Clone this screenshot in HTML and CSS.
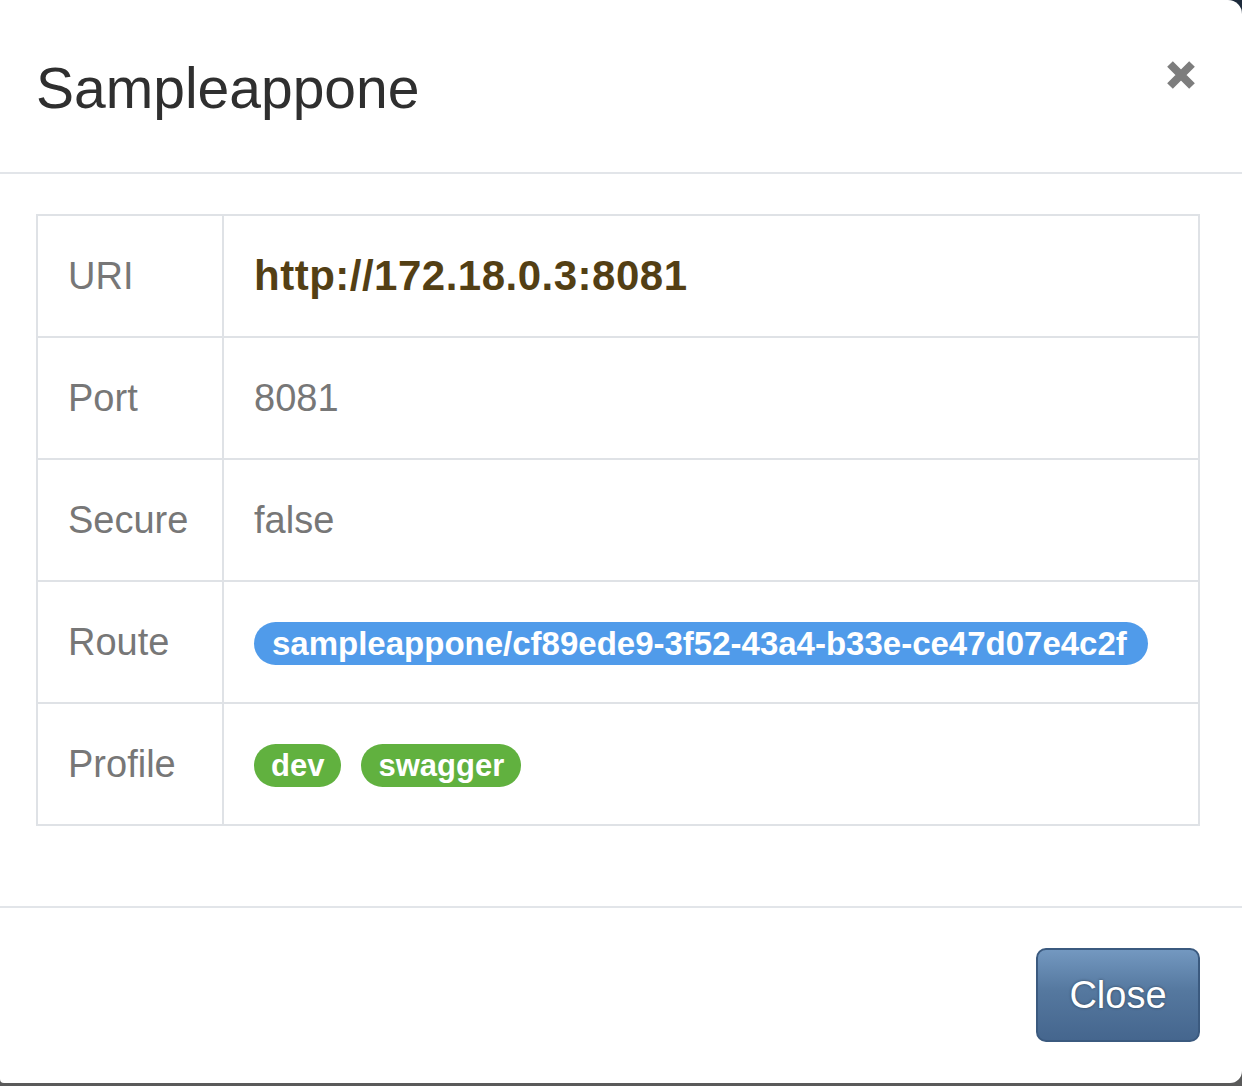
FILE: index.html
```html
<!DOCTYPE html>
<html>
<head>
<meta charset="utf-8">
<link rel="stylesheet" href="styles.css">
</head>
<body>
<div class="modal">
  <div class="modal-header">
    <h2 class="modal-title">Sampleappone</h2>
    <button class="close" aria-label="Close">
      <svg width="30" height="30" viewBox="0 0 30 30"><path d="M4 4 L26 26 M26 4 L4 26" stroke="#7d7d7d" stroke-width="8" stroke-linecap="butt"/></svg>
    </button>
  </div>
  <div class="modal-body">
    <table class="info">
      <tr><td class="key">URI</td><td class="val"><span class="uri">http://172.18.0.3:8081</span></td></tr>
      <tr><td class="key">Port</td><td class="val">8081</td></tr>
      <tr><td class="key">Secure</td><td class="val">false</td></tr>
      <tr><td class="key">Route</td><td class="val"><div class="badges"><span class="badge badge-blue">sampleappone/cf89ede9-3f52-43a4-b33e-ce47d07e4c2f</span></div></td></tr>
      <tr><td class="key">Profile</td><td class="val"><div class="badges"><span class="badge badge-green">dev</span><span class="badge badge-green">swagger</span></div></td></tr>
    </table>
  </div>
  <div class="modal-footer">
    <button class="btn">Close</button>
  </div>
</div>
</body>
</html>
```

FILE: styles.css
```css
html, body {
  margin: 0;
  padding: 0;
}
body {
  width: 1242px;
  height: 1086px;
  overflow: hidden;
  background: linear-gradient(#1c2a3b, #2a3340 40%, #5a5a5a);
  font-family: "Liberation Sans", Arial, Helvetica, sans-serif;
}
.modal {
  width: 1242px;
  height: 1083px;
  background: #fff;
  border-radius: 0 14px 12px 4px;
  display: flex;
  flex-direction: column;
  box-sizing: border-box;
}
.modal-header {
  height: 174px;
  box-sizing: border-box;
  padding: 56px 46px 0 36px;
  border-bottom: 2px solid #e2e5e9;
  display: flex;
  justify-content: space-between;
  align-items: flex-start;
}
.modal-title {
  margin: 0;
  font-size: 57px;
  line-height: 64px;
  font-weight: normal;
  color: #2f2f2f;
}
.close {
  margin-top: 4px;
  padding: 0;
  border: 0;
  background: none;
  width: 30px;
  height: 30px;
  display: block;
}
.close svg { display: block; }
.modal-body {
  padding: 40px 42px 80px 36px;
  border-bottom: 2px solid #e2e5e9;
}
.info {
  width: 100%;
  border-collapse: collapse;
  border: 2px solid #dfe2e6;
}
.info td {
  border: 2px solid #dfe2e6;
  height: 122px;
  padding: 0 30px;
  box-sizing: border-box;
  vertical-align: middle;
  font-size: 38px;
  color: #777;
}
.info td.key {
  width: 186px;
}
.uri {
  font-weight: bold;
  font-size: 42px;
  color: #533f14;
  letter-spacing: 0.5px;
}
.badges {
  display: flex;
  gap: 20px;
  padding-top: 3px;
}
.badge {
  display: inline-block;
  height: 43px;
  line-height: 44px;
  padding: 0 18px;
  border-radius: 22px;
  font-weight: bold;
  font-size: 33px;
  color: #fff;
  white-space: nowrap;
}
.badge-blue { background: #509bea; padding: 0 21px 0 18px; }
.badge-green {
  background: #61b13f;
  font-size: 31px;
  padding: 0 17px;
}
.modal-footer {
  padding: 40px 42px 0 36px;
  display: flex;
  justify-content: flex-end;
}
.btn {
  width: 164px;
  height: 94px;
  border-radius: 10px;
  border: 2px solid #3b5a7f;
  background: linear-gradient(#7398c0, #55789f 45%, #45668e);
  color: #fff;
  font-family: "Liberation Sans", Arial, sans-serif;
  font-size: 38px;
  text-shadow: 0 0 3px rgba(0,0,0,0.45);
  padding: 0;
}
```
